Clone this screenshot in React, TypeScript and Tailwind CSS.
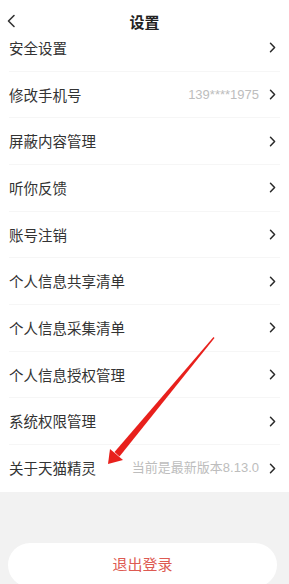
import React from 'react'

const rows: { label: string; value?: string }[] = [
  { label: '安全设置' },
  { label: '修改手机号', value: '139****1975' },
  { label: '屏蔽内容管理' },
  { label: '听你反馈' },
  { label: '账号注销' },
  { label: '个人信息共享清单' },
  { label: '个人信息采集清单' },
  { label: '个人信息授权管理' },
  { label: '系统权限管理' },
  { label: '关于天猫精灵', value: '当前是最新版本8.13.0' },
]

function Chevron() {
  return (
    <svg width="7" height="11" viewBox="0 0 7 11" className="shrink-0">
      <path d="M1.5 1.2 L5.6 5.5 L1.5 9.8" fill="none" stroke="#2a2a2a" strokeWidth="1.5" strokeLinecap="round" strokeLinejoin="round" />
    </svg>
  )
}

export default function App() {
  return (
    <div
      className="relative h-[584px] w-[289px] overflow-hidden bg-[#f2f2f2]"
      style={{ fontFamily: '"Noto Sans CJK SC", "Noto Sans", sans-serif' }}
    >
      <div className="bg-white">
        {/* Header */}
        <div className="relative h-[25px]">
          <svg width="10" height="14" viewBox="0 0 10 14" className="absolute left-[6px] top-[14px]">
            <path d="M8 1.5 L2.5 7 L8 12.5" fill="none" stroke="#333" strokeWidth="1.6" strokeLinecap="round" strokeLinejoin="round" />
          </svg>
          <div className="pt-[12px] text-center text-[15px] font-bold leading-[20px] text-[#222]">设置</div>
        </div>

        {/* List */}
        <div>
          {rows.map((row, i) => (
            <div key={row.label} className="px-[9px]">
              <div
                className={`flex h-[46.67px] items-center justify-between ${
                  i < rows.length - 1 ? 'border-b border-[#f6f6f6]' : ''
                }`}
              >
                <span className="text-[14.5px] text-[#333]">{row.label}</span>
                <div className="flex items-center gap-[10px] pr-[4px]">
                  {row.value && (
                    <span
                      className="text-[13px] text-[#bdbdbd]"
                      style={{ fontFamily: '"Liberation Sans", "Noto Sans CJK SC", sans-serif' }}
                    >
                      {row.value}
                    </span>
                  )}
                  <Chevron />
                </div>
              </div>
            </div>
          ))}
        </div>
      </div>

      {/* Logout */}
      <div className="px-[8px] pt-[51px]">
        <div className="flex h-[44px] w-[269px] items-center justify-center rounded-full bg-white text-[15px] text-[#dd5a52]">
          退出登录
        </div>
      </div>

      {/* Annotation arrow */}
      <svg className="pointer-events-none absolute left-0 top-0" width="289" height="584">
        <polygon points="213.5,337 214.5,338 119.5,456.5 114.5,452" fill="#e8201c" />
        <polygon points="108,464 110,449 123,460" fill="#e8201c" />
      </svg>
    </div>
  )
}
